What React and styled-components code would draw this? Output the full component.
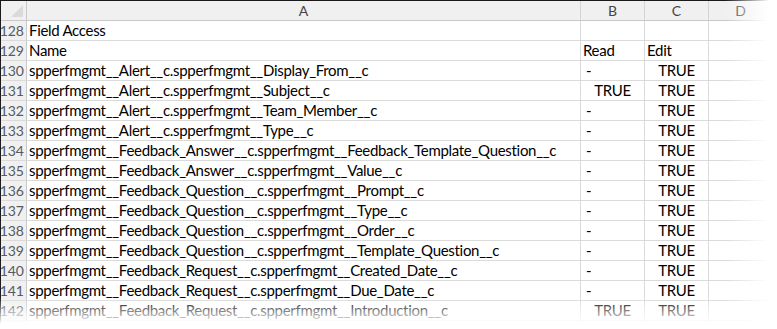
import React from "react";
import styled, { createGlobalStyle } from "styled-components";

const rows = [
  ["128", "Field Access", "", ""],
  ["129", "Name", "Read", "Edit"],
  ["130", "spperfmgmt__Alert__c.spperfmgmt__Display_From__c", "-", "TRUE"],
  ["131", "spperfmgmt__Alert__c.spperfmgmt__Subject__c", "TRUE", "TRUE"],
  ["132", "spperfmgmt__Alert__c.spperfmgmt__Team_Member__c", "-", "TRUE"],
  ["133", "spperfmgmt__Alert__c.spperfmgmt__Type__c", "-", "TRUE"],
  ["134", "spperfmgmt__Feedback_Answer__c.spperfmgmt__Feedback_Template_Question__c", "-", "TRUE"],
  ["135", "spperfmgmt__Feedback_Answer__c.spperfmgmt__Value__c", "-", "TRUE"],
  ["136", "spperfmgmt__Feedback_Question__c.spperfmgmt__Prompt__c", "-", "TRUE"],
  ["137", "spperfmgmt__Feedback_Question__c.spperfmgmt__Type__c", "-", "TRUE"],
  ["138", "spperfmgmt__Feedback_Question__c.spperfmgmt__Order__c", "-", "TRUE"],
  ["139", "spperfmgmt__Feedback_Question__c.spperfmgmt__Template_Question__c", "-", "TRUE"],
  ["140", "spperfmgmt__Feedback_Request__c.spperfmgmt__Created_Date__c", "-", "TRUE"],
  ["141", "spperfmgmt__Feedback_Request__c.spperfmgmt__Due_Date__c", "-", "TRUE"],
  ["142", "spperfmgmt__Feedback_Request__c.spperfmgmt__Introduction__c", "TRUE", "TRUE"],
];

const GlobalStyle = createGlobalStyle`
  html, body {
    margin: 0;
    padding: 0;
    background: #ffffff;
  }
  body {
    font-family: "Lato", "Noto Sans", sans-serif;
  }
`;

const Frame = styled.div`
  position: relative;
  width: 777px;
  height: 329px;
  overflow: hidden;
  background: #ffffff;
  padding: 1px 0 0 1px;
  box-sizing: border-box;
  box-shadow: inset 1px 1px 0 #1a1a1a;
`;

const Grid = styled.div`
  display: grid;
  grid-template-columns: 26px 554px 64px 64px 64px 64px;
  grid-auto-rows: 20px;
  font-size: 15px;
  letter-spacing: -0.3px;
  color: #000;
`;

const Corner = styled.div`
  position: relative;
  background: #f0f0f0;
  border-right: 1px solid #c8c8c8;
  border-bottom: 1px solid #c8c8c8;
  box-sizing: border-box;

  &::after {
    content: "";
    position: absolute;
    right: 3px;
    bottom: 3px;
    width: 0;
    height: 0;
    border-left: 12px solid transparent;
    border-bottom: 12px solid #dadada;
  }
`;

const ColHead = styled.div`
  display: flex;
  align-items: center;
  justify-content: center;
  background: #f0f0f0;
  border-right: 1px solid #d4d4d4;
  border-bottom: 1px solid #c8c8c8;
  box-sizing: border-box;
  color: #444;
  font-size: 14px;
  letter-spacing: 0;
`;

const RowHead = styled.div`
  display: flex;
  align-items: flex-end;
  justify-content: flex-end;
  padding: 0 2px 1px 0;
  background: #f0f0f0;
  border-right: 1px solid #c8c8c8;
  border-bottom: 1px solid #dadada;
  box-sizing: border-box;
  color: #555a66;
  font-size: 14px;
  letter-spacing: 0;
`;

const Cell = styled.div`
  display: flex;
  align-items: flex-end;
  justify-content: ${(p) => (p.$center ? "center" : "flex-start")};
  padding: 0 2px 1px ${(p) => (p.$dash ? "5px" : "2px")};
  border-right: 1px solid #dadada;
  border-bottom: 1px solid #dadada;
  box-sizing: border-box;
  white-space: nowrap;
  line-height: 18px;
`;

const FadeRight = styled.div`
  position: absolute;
  top: 0;
  right: 0;
  width: 52px;
  height: 100%;
  background: linear-gradient(to right, rgba(255, 255, 255, 0), #ffffff 85%);
  pointer-events: none;
`;

const FadeBottom = styled.div`
  position: absolute;
  left: 0;
  bottom: 0;
  width: 100%;
  height: 32px;
  background: linear-gradient(to bottom, rgba(255, 255, 255, 0), #ffffff 85%);
  pointer-events: none;
`;

const cellProps = (v) => ({
  $center: v === "TRUE",
  $dash: v === "-",
});

export default function App() {
  return (
    <>
      <GlobalStyle />
      <Frame>
        <Grid>
          <Corner />
          <ColHead>A</ColHead>
          <ColHead>B</ColHead>
          <ColHead>C</ColHead>
          <ColHead>D</ColHead>
          <ColHead />
          {rows.map(([num, name, read, edit]) => (
            <React.Fragment key={num}>
              <RowHead>{num}</RowHead>
              <Cell>{name}</Cell>
              <Cell {...cellProps(read)}>{read}</Cell>
              <Cell {...cellProps(edit)}>{edit}</Cell>
              <Cell />
              <Cell />
            </React.Fragment>
          ))}
          <RowHead />
          <Cell />
          <Cell />
          <Cell />
          <Cell />
          <Cell />
        </Grid>
        <FadeRight />
        <FadeBottom />
      </Frame>
    </>
  );
}
